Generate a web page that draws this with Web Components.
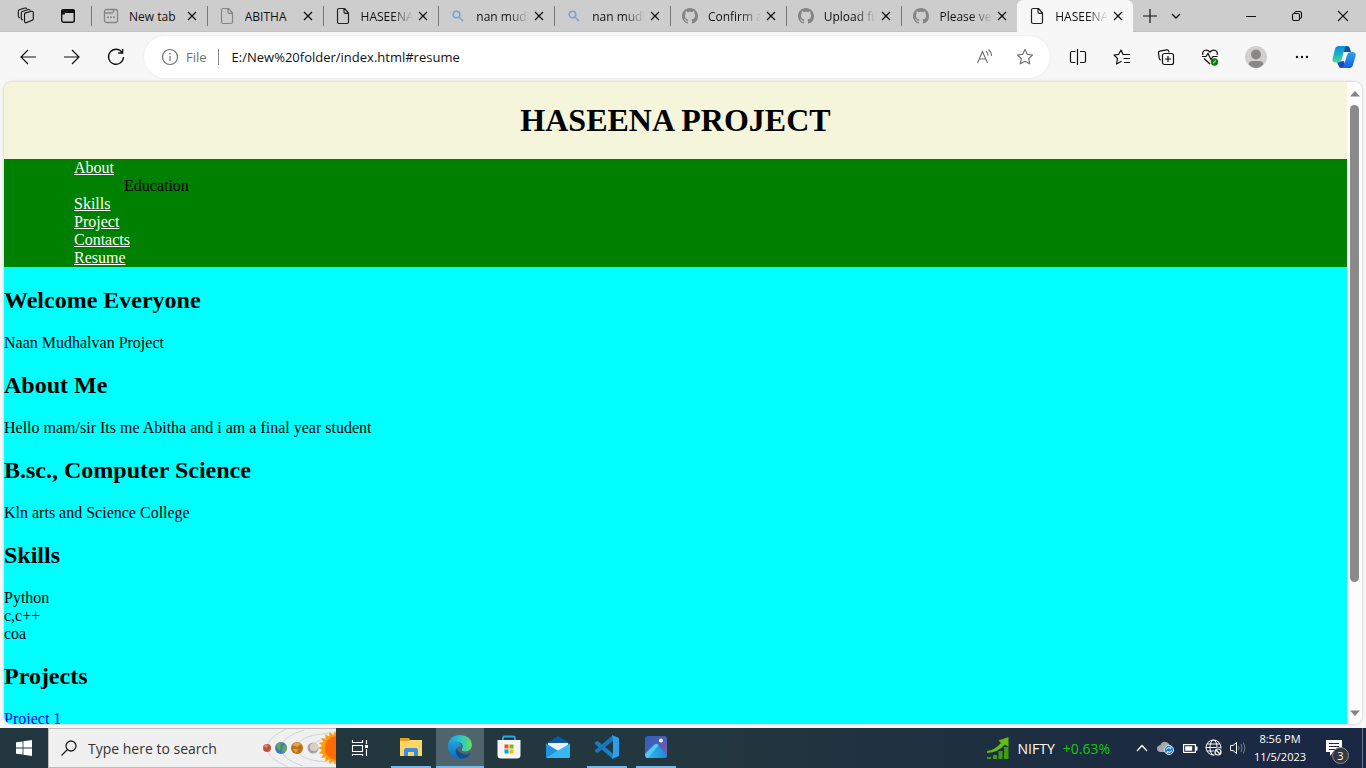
<!DOCTYPE html>
<html lang="en">
<head>
<meta charset="utf-8">
<title>HASEENA PROJECT</title>
<style>
html, body { height: 100%; margin: 0; }
body { font-family: "Open Sans", "Noto Sans", sans-serif; font-size: 12px; color: #111; overflow: hidden; }
</style>
</head>
<body>
<desk-top></desk-top>
<script>
const define = (name, html, setup) => {
  const template = document.createElement('template');
  template.innerHTML = html;
  customElements.define(name, class extends HTMLElement {
    constructor() {
      super();
      this.attachShadow({ mode: 'open' }).append(template.content.cloneNode(true));
    }
    connectedCallback() { if (setup) setup(this, this.shadowRoot); }
  });
};

/* Icon set: [width, height, markup]. Strokes follow the text colour. */
const line = 'fill="none" stroke="currentColor"';
const sunRays = Array.from({ length: 40 }, (_, i) => {
  const a = i * Math.PI / 20, r = i % 2 ? 13 : 17;
  return (73 + r * Math.cos(a)).toFixed(1) + ',' + (19 + r * Math.sin(a)).toFixed(1);
}).join(' ');
const icons = {
  workspaces: [18, 18, `<g ${line} stroke-width="1.1" stroke-linejoin="round"><path d="M7.500 7.200q0-1 1-1.300l6-1.600q1.800-.3 1.800 1.300v6.200q0 1-1 1.400l-5.600 2.300q-2 .6-2.200-1.300z"/><path d="M6 13Q4.300 13 4.300 11V5.800q0-1 1-1.400l6-1.900q1.500-.3 2 1.200"/><path d="M3 11Q1.300 10.500 1.300 9V4.200q0-1 1-1.400L8 1q1.300-.3 1.900.8"/></g>`],
  tabmenu: [16, 16, `<rect x="1.700" y="1.700" width="12.600" height="12.600" rx="2" ${line} stroke-width="1.400"/><path fill="currentColor" d="M1 5V3.500Q1 1 3.500 1h9Q15 1 15 3.500V5zM1 5h4v1.500H1z"/>`],
  newtab: [16, 16, `<g ${line} stroke-width="1.300"><rect x="1.500" y="1.500" width="13" height="13" rx="2"/><path d="M1.500 5H9q1.500 0 1.500-1.500v-2"/></g><path fill="currentColor" d="M4 8.500h2v1.500H4zm3 0h2v1.500H7zm3 0h2v1.500h-2z"/>`],
  file: [16, 18, `<path ${line} stroke-width="1.200" stroke-linejoin="round" d="M2.500 3q0-1.500 1.500-1.500h5.500L13.500 6v9q0 1.500-1.500 1.500H4q-1.500 0-1.500-1.500zM9 1.500V5q0 1.300 1.300 1.300h3"/>`],
  find: [16, 16, `<g ${line} stroke-width="1.600"><circle cx="6.500" cy="6.500" r="3.300"/><path d="M9 9l4 4"/></g>`],
  github: [16, 16, `<path fill="currentColor" d="M8 0C3.580 0 0 3.580 0 8c0 3.540 2.290 6.530 5.470 7.590.4.070.55-.17.55-.38 0-.19-.01-.82-.01-1.490-2.010.37-2.530-.49-2.690-.94-.09-.23-.48-.94-.82-1.130-.28-.15-.68-.52-.01-.53.63-.01 1.080.58 1.230.82.72 1.210 1.870.87 2.330.66.070-.52.28-.87.51-1.070-1.780-.2-3.640-.89-3.640-3.950 0-.87.31-1.590.82-2.150-.08-.2-.36-1.020.08-2.120 0 0 .67-.21 2.200.82.64-.18 1.320-.27 2-.27s1.360.09 2 .27c1.530-1.040 2.200-.82 2.200-.82.44 1.100.16 1.920.08 2.120.51.56.82 1.270.82 2.150 0 3.070-1.870 3.750-3.650 3.950.29.25.54.73.54 1.480 0 1.070-.01 1.930-.01 2.200 0 .21.15.46.55.38A8.010 8.010 0 0 0 16 8c0-4.420-3.580-8-8-8z"/>`],
  close: [12, 12, `<path ${line} stroke-width="1.300" d="M2 2l8 8M10 2l-8 8"/>`],
  plus: [14, 14, `<path ${line} stroke-width="1.200" d="M7 0v14M0 7h14"/>`],
  down: [10, 10, `<path ${line} stroke-width="1.400" d="M1 3l4 4 4-4"/>`],
  minimize: [12, 12, `<path ${line} d="M1 6.500h10"/>`],
  restore: [12, 12, `<g ${line} stroke-width="1.100"><rect x="1.500" y="3.500" width="7" height="7" rx="1.500"/><path d="M3.500 3.500Q3.500 1.500 5 1.500h3.500q2 0 2 2V7q0 1.500-2 1.500"/></g>`],
  exit: [12, 12, `<path ${line} stroke-width="1.100" d="M1 1l10 10M11 1L1 11"/>`],
  back: [18, 18, `<path ${line} stroke-width="1.200" d="M9 2L2 9l7 7M2 9h15"/>`],
  forward: [18, 18, `<path ${line} stroke-width="1.200" d="M9 2l7 7-7 7M16 9H1"/>`],
  refresh: [18, 18, `<path ${line} stroke-width="1.300" d="M15.200 4.500A7.500 7.500 0 1 0 16.500 9M15.700 1v4h-4.500"/>`],
  info: [18, 18, `<circle cx="9" cy="9" r="7.500" ${line} stroke-width="1.200"/><path fill="currentColor" d="M8.400 8h1.200v5H8.400zM8.300 5h1.400v1.400H8.300z"/>`],
  aloud: [18, 18, `<g ${line} stroke-width="1.100"><path d="M1.500 15L6.500 3.500 11.500 15M3.200 11h6.600M10 3q2 1.800 2 4.500M12.500 1.500q3 2.500 3 6.500"/></g>`],
  star: [18, 18, `<path ${line} stroke-width="1.200" stroke-linejoin="round" d="M9 1.500l2.300 4.800 5.200.7-3.800 3.600 1 5.200L9 13.300l-4.700 2.500 1-5.200L1.500 7l5.200-.7z"/>`],
  split: [18, 18, `<g ${line} stroke-width="1.200"><path d="M6.500 3.500H3Q1.500 3.500 1.500 5v8q0 1.500 1.500 1.500h3.500M11 3.500h4q1.500 0 1.500 1.500v8q0 1.500-1.500 1.500h-4M8.500 1v16"/></g>`],
  favorites: [18, 18, `<g ${line} stroke-width="1.200" stroke-linejoin="round"><path d="M11 6.500H10L8 2 5.700 6.300 1 7l3.500 3.500-1 5.500 5-2.700M11 6.500h6M10.500 10.500H17M11 14.500h6"/></g>`],
  collections: [18, 18, `<g ${line} stroke-width="1.200"><path d="M4 12Q2.500 12 2.200 10L1.500 5q-.2-1.500 1.300-1.800l7-1.400q1.500-.2 2 1.500l.2 1"/><rect x="5.500" y="5.500" width="11" height="11" rx="2"/><path d="M11 8v6M8 11h6"/></g>`],
  health: [18, 18, `<g ${line} stroke-width="1.200"><path d="M2 7Q.8 4 3.500 2.500 6.500 1.200 9 4q2.500-2.800 5.500-1.500Q17.200 4 16 7M3 10.500l6 5.500M1 8.500h4L7 5.500l3 6 2-3h4.500"/></g><circle cx="13.500" cy="14" r="3.700" fill="#107c10"/><path fill="none" stroke="#fff" d="M12 15.300l3-2.800"/>`],
  profile: [22, 22, `<circle cx="11" cy="11" r="11" fill="#d2d0ce"/><circle cx="11" cy="8.500" r="5" fill="#8a8886"/><path fill="#8a8886" d="M3.500 18q1-3 4-3h7q3 0 4 3-3 4-7.500 4t-7.500-4z"/>`],
  dots: [16, 16, `<g fill="currentColor"><circle cx="3" cy="8" r="1.200"/><circle cx="8" cy="8" r="1.200"/><circle cx="13" cy="8" r="1.200"/></g>`],
  copilot: [24, 24, `<defs><linearGradient id="a" x2="0" y2="1"><stop stop-color="#1689e0"/><stop offset=".5" stop-color="#12b5c9"/><stop offset="1" stop-color="#55d58e"/></linearGradient><linearGradient id="b" x2="0" y2="1"><stop stop-color="#2ba5ec"/><stop offset="1" stop-color="#1b5ce0"/></linearGradient></defs><path fill="#0b56a3" d="M8 1h7q2 0 2.700 2l1.300 4h-7z"/><path fill="#1b44c8" d="M5 17l7-1 2 7H9q-1.500 0-2-1.500z"/><path fill="url(#a)" d="M6.500 1H15q-2 1-2.500 3L9.500 15q-.8 2.500-3.500 2.500H3Q0 17 .5 14L3 4Q4 1 6.500 1z"/><path fill="url(#b)" d="M17.500 23H9.500q2-1 2.700-3.500l3-10Q16 7 18.500 7H21q3 .5 2.700 3.500L21 20q-1 3-3.500 3z"/>`],
  windows: [16, 16, `<path fill="#fff" d="M0 2.300L6.600 1.400v6.200H0zM7.400 1.200L16 0v7.600H7.400zM0 8.400h6.600v6.200L0 13.700zM7.400 8.400H16V16l-8.600-1.200z"/>`],
  search: [16, 16, `<g ${line} stroke-width="1.300"><circle cx="10" cy="6" r="5"/><path d="M6.500 9.500L0.500 15.500"/></g>`],
  planets: [74, 38, `<g fill="none" stroke="#d0d3d6"><path d="M24 0Q5 9 5 19t21 19M42 1Q19 8 19 19t22 18M74 4Q35 5 35 19t39 14M74 9Q51 9 51 19"/></g><circle cx="5" cy="19" r="4" fill="#b9543a"/><circle cx="4" cy="17" r="1.800" fill="#dc8e60"/><circle cx="19" cy="19" r="6" fill="#3d79c8"/><path fill="#63a84a" d="M14 16q3-4 6-2l-2 3 1 2-2 3zM21 16l4 1-1 5-3 2-1-4z"/><circle cx="35" cy="19" r="6" fill="#b9711e"/><path fill="#e3a63b" d="M30 16q5-5 9-1l-4 3zM31 20l5 0-2 4z"/><circle cx="51" cy="19" r="5.500" fill="#a3a2ad"/><circle cx="52" cy="18" r="4" fill="#d9d1bd"/><polygon fill="#ff9a0c" points="${sunRays}"/><circle cx="75" cy="19" r="12" fill="#ff6b00"/>`],
  taskview: [18, 16, `<g ${line} stroke-width="1.100"><rect x="1.500" y="5.500" width="10" height="6"/><path d="M1.500 0v2.500h10V0M1.500 16v-1.500h10V16M15.500 0v4M15.500 9v7"/></g><path fill="currentColor" d="M14 5h3v3h-3z"/>`],
  explorer: [24, 24, `<path fill="#e3a21a" d="M1 3h9l1 2H23v4H1z"/><path fill="#ffd665" d="M1 6h8l2-1h12v16H1z"/><path fill="#3b8edc" d="M5 21v-6q0-2 2-2h10q2 0 2 2v6h-4v-4H9v4z"/>`],
  edge: [24, 24, `<defs><linearGradient id="a"><stop stop-color="#1b9de2"/><stop offset=".6" stop-color="#31c9c0"/><stop offset="1" stop-color="#68e04b"/></linearGradient><linearGradient id="b" x2="0" y2="1"><stop stop-color="#1ba2e3"/><stop offset="1" stop-color="#1369bd"/></linearGradient></defs><path fill="url(#a)" d="M0 11Q1 0 12.500 0 23.500 1 24 10q-.5 6-7 6.500-4 0-3-2.500 2.500-4-2-6.500Q4 5 0 11z"/><path fill="url(#b)" d="M0 12q1-6 7.500-5.500 5 .5 6 5-5-1-5 3.500 1 7 9 8.200-2.500.8-5.500.8Q1 23.500 0 12z"/><path fill="#124d92" d="M8 13Q6.500 19.500 12 23.500q7 .5 11-5.500-5 2.500-9 .5Q9.500 17 8 13z"/>`],
  store: [24, 24, `<path fill="none" stroke="#28a9e8" stroke-width="1.800" d="M6 6V3q0-1.500 1.500-1.500h9Q18 1.500 18 3v3"/><path fill="#f5f5f5" d="M.5 5h23v15q0 3.500-3.500 3.500H4Q.5 23.500.5 20z"/><path fill="#f25022" d="M7.500 9.500h4v4h-4z"/><path fill="#7fba00" d="M12.500 9.500h4v4h-4z"/><path fill="#00a4ef" d="M7.500 14.500h4v4h-4z"/><path fill="#ffb900" d="M12.500 14.500h4v4h-4z"/>`],
  mail: [24, 24, `<path fill="#0b57a8" d="M0 8.500L12 1l12 7.500V12H0z"/><path fill="#f2f2f2" d="M2 8h20v6l-10 4-10-4z"/><path fill="#2192de" d="M0 8.500L24 23H1.500Q0 23 0 21.500z"/><path fill="#38b8f2" d="M24 8.500v13q0 1.500-1.500 1.500H0l12-7.500z"/>`],
  vscode: [24, 24, `<path fill="#1580c4" d="M0 7.500L2.500 6 18 18.500V24L0 9z"/><path fill="#1b75bb" d="M0 16.500L2.500 18 18 6V0L0 15z"/><path fill="#2c9fe8" d="M17 0l7 3v18l-7 3 1-5.500V5.500z"/>`],
  photos: [22, 22, `<defs><linearGradient id="a" x2="1" y2="1"><stop stop-color="#2461bb"/><stop offset=".6" stop-color="#5b5db5"/><stop offset="1" stop-color="#8e50a2"/></linearGradient><linearGradient id="b" x2="1"><stop stop-color="#38b8ee"/><stop offset="1" stop-color="#178bdb"/></linearGradient></defs><rect width="22" height="22" rx="3" fill="url(#a)"/><circle cx="16" cy="4.500" r="2" fill="#fff"/><path fill="url(#b)" d="M1 21l9-11.500q1.500-2 3.500 0l8.500 9.500q0 3-3 3H3z"/><path fill="#51c9f7" d="M0 18l9.500-9.500q2-1.500 4 .5L3 22q-3 0-3-4z"/>`],
  growth: [24, 24, `<path fill="#3f9b12" d="M1 21h4v2H1zm6-2h4v4H7zm5.500-4h4v8h-4zM18 11h4.500v12H18z"/><path fill="#66bc12" d="M1 17V15q8-1 14-8l-2.500-2.500L22.500 1v10L19 8.500Q12 16.500 1 17z"/>`],
  up: [12, 8, `<path ${line} stroke-width="1.300" d="M1 7l5-5.500L11 7"/>`],
  cloud: [18, 14, `<path fill="#a5a8ad" d="M3 11Q0 10.500 0 7.500T3.500 4Q5 0 9 1q3 .5 3.500 3.500Q15 5 15 8v3z"/><circle cx="12" cy="9" r="4.600" fill="#1976c9" stroke="#fff" stroke-width=".8"/><path fill="none" stroke="#fff" d="M9 8.500q1.500-3 5-1.200V5.500M15 9.500q-1.500 3-5 1.200v1.800"/>`],
  battery: [16, 12, `<rect x="1.600" y="2.600" width="11.800" height="7.800" ${line} stroke-width="1.200"/><path fill="currentColor" d="M3.200 4.200h7v4.600h-7zM14 4.500h1.500v4H14z"/>`],
  globe: [18, 18, `<g ${line}><circle cx="8.500" cy="8.500" r="7.500"/><ellipse cx="8.500" cy="8.500" rx="3.500" ry="7.500"/><path d="M1 8.500h15M2 5h13M2 12h8"/></g><circle cx="13" cy="13" r="4.500" fill="#1b2942"/><g ${line} stroke-width="1.200"><circle cx="13" cy="13" r="3"/><path d="M11 11l4 4"/></g>`],
  speaker: [18, 14, `<path ${line} d="M1.500 4.500H4L7.500 1.500v11L4 9.500H1.500z"/><g fill="none" stroke="#78829a"><path d="M9.500 5q1 2 0 4M12 3q2 4 0 8M14.500 1.500q3 5.500 0 11"/></g>`],
  note: [18, 16, `<path fill="currentColor" d="M1 0h16v12H8l-3 4v-4H1z"/><path stroke="#1b2942" d="M4 3.500h10M4 6.500h10M4 9.500h7"/>`],
  tri: [10, 6, `<path fill="#858585" d="M0 5.500L5 0l5 5.500z"/>`],
  tridown: [10, 6, `<path fill="#858585" d="M0 .5L5 6 10 .5z"/>`]
};
define('ui-icon', `<style>:host{display:block;flex:none}svg{display:block}</style>`, (host, root) => {
  if (root.querySelector('svg')) return;
  const [w, h, art] = icons[host.getAttribute('name')];
  root.innerHTML += `<svg width="${w}" height="${h}" viewBox="0 0 ${w} ${h}" aria-hidden="true">${art}</svg>`;
});

define('icon-button', `
<style>
:host{display:block;flex:none;width:44px;height:100%}
button{display:flex;align-items:center;justify-content:center;width:100%;height:100%;padding:0;border:0;background:none;color:inherit;font:inherit}
</style>
<button type="button"></button>`, (host, root) => {
  const icon = document.createElement('ui-icon');
  icon.setAttribute('name', host.getAttribute('icon'));
  const button = root.querySelector('button');
  button.setAttribute('aria-label', host.getAttribute('label'));
  button.replaceChildren(icon);
});
</script>
<script>
define('browser-tab', `
<style>
:host{display:flex;flex:1 1 0;min-width:0;align-items:center;height:32px;box-sizing:border-box;padding-right:5px}
:host::before{content:"";flex:none;width:1px;height:20px;background:#777}
:host([active]){background:#f7f7f7;border-radius:6px 6px 0 0}
:host([active])::before{background:none}
.pick{display:flex;flex:1;min-width:0;align-items:center;gap:10px;height:100%;padding:0 0 0 11px;border:0;background:none;font:inherit;color:#111;text-align:left}
.icon{width:16px;color:var(--tint,#222)}
.title{flex:1;min-width:0;overflow:hidden;white-space:nowrap;-webkit-mask-image:linear-gradient(90deg,#000 60%,transparent);mask-image:linear-gradient(90deg,#000 60%,transparent)}
:host([full]) .title{-webkit-mask-image:none;mask-image:none}
icon-button{width:20px;height:20px}
</style>
<button class="pick" type="button"><span class="icon"></span><span class="title"><slot></slot></span></button>
<icon-button icon="close" label="Close tab"></icon-button>`, (host, root) => {
  const icon = document.createElement('ui-icon');
  icon.setAttribute('name', host.getAttribute('icon'));
  root.querySelector('.icon').replaceChildren(icon);
});

define('tab-strip', `
<style>
:host{display:flex;align-items:center;height:32px;flex:none;background:#cdcdcd;box-shadow:inset 0 -1px #c2c2c2}
.lead{display:flex;flex:none;width:86px;height:100%;padding-left:5px}
.lead icon-button{width:42px}
.tabs{display:flex;flex:1;min-width:0}
.more{display:flex;flex:none;height:100%;padding-left:4px}
.more icon-button{width:26px}
.window{display:flex;flex:none;height:100%;padding-left:39px}
.window icon-button{width:46px}
.grey{--tint:#858585}.blue{--tint:#6ea6d8}
</style>
<div class="lead"><icon-button icon="workspaces" label="Workspaces"></icon-button><icon-button icon="tabmenu" label="Tab actions menu"></icon-button></div>
<nav class="tabs" aria-label="Open tabs">
<browser-tab full class="grey" icon="newtab">New tab</browser-tab>
<browser-tab full class="grey" icon="file">ABITHA</browser-tab>
<browser-tab icon="file">HASEENA</browser-tab>
<browser-tab class="blue" icon="find">nan mudhalvan</browser-tab>
<browser-tab class="blue" icon="find">nan mudhalvan</browser-tab>
<browser-tab class="grey" icon="github">Confirm access</browser-tab>
<browser-tab class="grey" icon="github">Upload files</browser-tab>
<browser-tab class="grey" icon="github">Please verify</browser-tab>
<browser-tab active icon="file">HASEENA</browser-tab>
</nav>
<div class="more"><icon-button icon="plus" label="New tab"></icon-button><icon-button icon="down" label="Search tabs"></icon-button></div>
<div class="window"><icon-button icon="minimize" label="Minimize"></icon-button><icon-button icon="restore" label="Restore"></icon-button><icon-button icon="exit" label="Close"></icon-button></div>`);

define('tool-bar', `
<style>
:host{display:flex;align-items:center;gap:6px;height:50px;box-sizing:border-box;flex:none;padding:0 2px 0 6px}
.group{display:flex;height:100%}
.wide{width:48px}
.copilot{width:40px}
form{display:flex;flex:1;min-width:0;align-items:center;height:42px;box-sizing:border-box;padding:0 5px 0 17px;border-radius:21px;background:#fff;box-shadow:0 0 2px #e0e0e0;color:#707070;font-size:13px}
label{padding:0 11px 0 7px;border-right:1px solid #8a8a8a;line-height:16px}
input{flex:1;min-width:0;margin:0;padding:0 0 0 13px;border:0;outline:0;background:none;font:inherit;color:#111}
form icon-button{width:40px}
</style>
<div class="group"><icon-button icon="back" label="Back"></icon-button><icon-button icon="forward" label="Forward"></icon-button><icon-button icon="refresh" label="Refresh"></icon-button></div>
<form><ui-icon name="info"></ui-icon><label for="url">File</label><input id="url" value="E:/New%20folder/index.html#resume" spellcheck="false"><icon-button icon="aloud" label="Read aloud"></icon-button><icon-button icon="star" label="Add to favorites"></icon-button></form>
<div class="group"><icon-button icon="split" label="Split screen"></icon-button><icon-button icon="favorites" label="Favorites"></icon-button><icon-button icon="collections" label="Collections"></icon-button><icon-button icon="health" label="Browser essentials"></icon-button><icon-button class="wide" icon="profile" label="Profile"></icon-button><icon-button icon="dots" label="Settings and more"></icon-button><icon-button class="copilot" icon="copilot" label="Copilot"></icon-button></div>`);

define('scroll-rail', `
<style>
:host{display:flex;flex:none;flex-direction:column;align-items:center;width:15px;background:#fcfcfc}
.arrow{display:flex;flex:none;align-items:center;height:23px}
.thumb{flex:4;width:9px;border-radius:5px;background:#8a8a8a}
.rest{flex:1}
</style>
<div class="arrow"><ui-icon name="tri"></ui-icon></div><div class="thumb"></div><div class="rest"></div><div class="arrow"><ui-icon name="tridown"></ui-icon></div>`);

define('resume-section', `
<style>
:host{display:block}
h2{margin:20px 0;font-size:24px;line-height:27px}
.text{margin:20px 0;line-height:18px}
</style>
<h2><slot name="title"></slot></h2><div class="text"><slot></slot></div>`);

define('resume-page', `
<style>
:host{display:flex;flex-direction:column;flex:1;min-width:0;overflow:hidden;color:#000;font-family:"Liberation Serif",serif;font-size:16px;line-height:18px}
header{flex:none;padding:20px 0;background:beige;text-align:center}
h1{margin:0;font-size:32px;line-height:37px}
nav{flex:none;background:green}
ul{margin:0;padding:0 0 0 70px;list-style:none}
nav a{color:#fff}
.sub{padding-left:50px}
main{display:flow-root;flex:1 0 auto;background:#0ff}
main a{color:#00e;text-decoration:none}
</style>
<header><h1>HASEENA PROJECT</h1></header>
<nav><ul><li><a href="#about">About</a></li><li class="sub">Education</li><li><a href="#skills">Skills</a></li><li><a href="#project">Project</a></li><li><a href="#contacts">Contacts</a></li><li><a href="#resume">Resume</a></li></ul></nav>
<main>
<resume-section><span slot="title">Welcome Everyone</span>Naan Mudhalvan Project</resume-section>
<resume-section id="about"><span slot="title">About Me</span>Hello mam/sir Its me Abitha and i am a final year student</resume-section>
<resume-section><span slot="title">B.sc., Computer Science</span>Kln arts and Science College</resume-section>
<resume-section id="skills"><span slot="title">Skills</span>Python<br>c,c++<br>coa</resume-section>
<resume-section id="project"><span slot="title">Projects</span><a href="#project">Project 1</a></resume-section>
</main>`);

define('task-app', `
<style>
:host{display:flex;flex:none;flex-direction:column;align-items:center;width:48px;height:40px}
:host([active]){background:#50646d}
.slot{flex:1;width:100%;min-height:0}
.slot icon-button{width:100%}
.mark{width:40px;height:2px}
:host([open]) .mark{background:#76b9ed}
:host([active]) .mark{width:48px}
</style>
<div class="slot"></div><div class="mark"></div>`, (host, root) => {
  const button = document.createElement('icon-button');
  button.setAttribute('icon', host.getAttribute('icon'));
  button.setAttribute('label', host.getAttribute('label'));
  root.querySelector('.slot').replaceChildren(button);
});

define('task-bar', `
<style>
:host{display:flex;flex:none;align-items:center;height:40px;background:linear-gradient(90deg,#21363e,#23373f 50%,#1c2c40 80%,#1a2744);color:#fff}
icon-button{width:48px}
form{display:flex;flex:none;align-items:center;width:288px;height:40px;box-sizing:border-box;border:1px solid #bcbcbc;border-right:0;padding-left:12px;background:#f0f0f0;color:#222}
input{flex:1;min-width:0;margin:0;padding:0 0 0 11px;border:0;outline:0;background:none;font:inherit;font-size:14px;color:#333}
input::placeholder{color:#333;opacity:1}
.apps{display:flex;gap:1px;padding-left:3px}
.space{flex:1}
.stock{display:flex;align-items:center;gap:8px;height:100%;padding:0 20px 0 0;border:0;background:none;color:inherit;font:inherit;font-size:14px}
.stock b{font-weight:400;color:#16c60c}
.tray{display:flex;height:100%}
.tray icon-button{width:24px}
.clock{width:60px;font-size:11px;text-align:center;line-height:18px}
.notes{position:relative;display:flex;justify-content:center;width:52px;height:100%}
.notes icon-button{width:100%}
.notes icon-button{padding-right:4px;box-sizing:border-box}
.badge{position:absolute;left:22px;top:19px;width:15px;height:15px;border:1px solid #8a8f99;border-radius:50%;background:#333841;font-size:11px;line-height:15px;text-align:center}
.edge{width:4px;height:100%;box-sizing:border-box;border-left:1px solid #6b7588}
</style>
<icon-button icon="windows" label="Start"></icon-button>
<form role="search"><ui-icon name="search"></ui-icon><input aria-label="Search" placeholder="Type here to search"><ui-icon name="planets"></ui-icon></form>
<icon-button icon="taskview" label="Task view"></icon-button>
<div class="apps"><task-app open icon="explorer" label="File Explorer"></task-app><task-app open active icon="edge" label="Microsoft Edge"></task-app><task-app icon="store" label="Microsoft Store"></task-app><task-app icon="mail" label="Mail"></task-app><task-app open icon="vscode" label="Visual Studio Code"></task-app><task-app open icon="photos" label="Photos"></task-app></div>
<div class="space"></div>
<button class="stock" type="button"><ui-icon name="growth"></ui-icon><span>NIFTY</span><b>+0.63%</b></button>
<div class="tray"><icon-button icon="up" label="Show hidden icons"></icon-button><icon-button icon="cloud" label="OneDrive"></icon-button><icon-button icon="battery" label="Battery"></icon-button><icon-button icon="globe" label="Network"></icon-button><icon-button icon="speaker" label="Volume"></icon-button></div>
<div class="clock"><div>8:56 PM</div><div>11/5/2023</div></div>
<div class="notes"><icon-button icon="note" label="Notifications"></icon-button><span class="badge">3</span></div>
<div class="edge"></div>`);

define('desk-top', `
<style>
:host{display:flex;flex-direction:column;height:100vh;background:#f7f7f7}
.view{display:flex;flex:1;min-height:0;margin:0 4px 4px;overflow:hidden;border-radius:8px;box-shadow:0 0 3px #bbb}
</style>
<tab-strip></tab-strip><tool-bar></tool-bar>
<div class="view"><resume-page></resume-page><scroll-rail></scroll-rail></div>
<task-bar></task-bar>`);
</script>
</body>
</html>
